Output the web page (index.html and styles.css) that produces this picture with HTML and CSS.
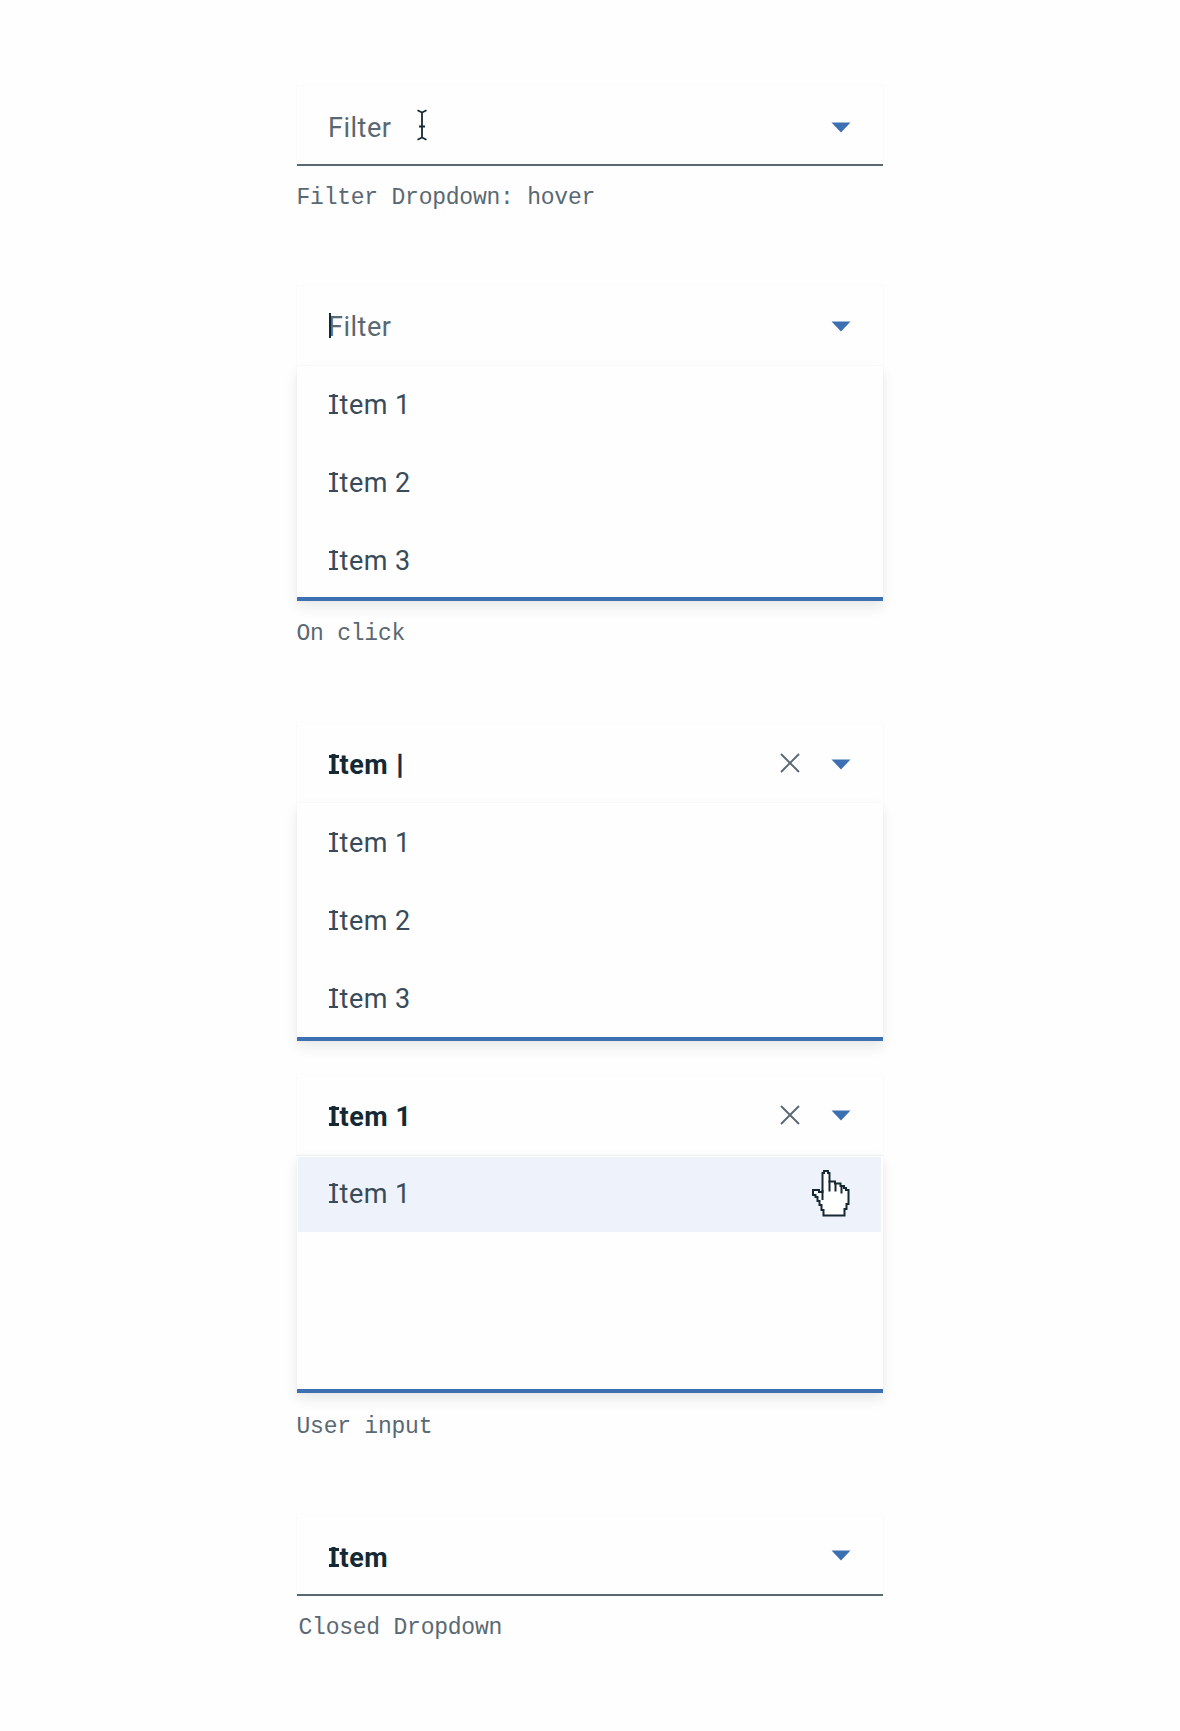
FILE: index.html
```html
<!DOCTYPE html>
<html lang="en">
<head>
<meta charset="utf-8">
<title>Filter Dropdown</title>
<link rel="stylesheet" href="styles.css">
</head>
<body>
<svg width="0" height="0" class="defs" aria-hidden="true">
  <symbol id="arrow" viewBox="0 0 20 11"><path d="M.5.5h19L10 10.5z" fill="#3d70b2"/></symbol>
  <symbol id="clear" viewBox="0 0 20 20"><path d="M1 1l18 18M19 1L1 19" fill="none" stroke="#5a6872" stroke-width="1.9"/></symbol>
</svg>
<main class="states">
  <section class="state state-hover">
    <div class="field closed">
      <span class="label placeholder">Filter</span>
      <svg class="ibeam" viewBox="0 0 10 32"><path d="M.5 1.2L5 3.500 9.500 1.200M5 3.500v25M.5 30.800L5 28.500l4.500 2.300M2 17.500h6" fill="none" stroke="#152935" stroke-width="1.8"/></svg>
      <svg class="arrow"><use href="#arrow"/></svg>
    </div>
    <p class="caption">Filter Dropdown: hover</p>
  </section>

  <section class="state state-click">
    <div class="field">
      <span class="label placeholder">Filter<i class="caret"></i></span>
      <svg class="arrow"><use href="#arrow"/></svg>
    </div>
    <ul class="menu">
      <li class="item">Item 1</li>
      <li class="item">Item 2</li>
      <li class="item">Item 3</li>
    </ul>
    <p class="caption">On click</p>
  </section>

  <section class="state state-typing">
    <div class="field">
      <span class="label value">Item <span class="bar">|</span></span>
      <svg class="clear"><use href="#clear"/></svg>
      <svg class="arrow"><use href="#arrow"/></svg>
    </div>
    <ul class="menu">
      <li class="item">Item 1</li>
      <li class="item">Item 2</li>
      <li class="item">Item 3</li>
    </ul>
  </section>

  <section class="state state-match">
    <div class="field">
      <span class="label value">Item 1</span>
      <svg class="clear"><use href="#clear"/></svg>
      <svg class="arrow"><use href="#arrow"/></svg>
    </div>
    <ul class="menu">
      <li class="item active">Item 1
        <svg class="hand" viewBox="0 0 38 47"><path d="M12 1h4v2h1.500v8.500H23v2h5.500V16H32v2h2v2h2.500v14h-2v5h-2v6.500h-21V40H9.500v-5h-2v-4h-2v-4h-2v-2H1v-5h6v2h3.500V3H12z" fill="#fff" stroke="#152935" stroke-width="2"/><path d="M10.500 20v10M17.500 11v10.500M23.500 13v8.500M29.500 16v7.500" fill="none" stroke="#152935" stroke-width="2"/></svg>
      </li>
    </ul>
    <p class="caption">User input</p>
  </section>

  <section class="state state-closed">
    <div class="field closed">
      <span class="label value">Item</span>
      <svg class="arrow"><use href="#arrow"/></svg>
    </div>
    <p class="caption">Closed Dropdown</p>
  </section>
</main>
</body>
</html>
```
FILE: styles.css
```css
* { box-sizing: border-box; }
body {
  margin: 0;
  background: #fefefe;
  font-family: Roboto, "Liberation Sans", sans-serif;
  font-size: 27px;
  color: #394b59;
}
.defs { position: absolute; }
.states {
  width: 586px;
  margin: 0 0 0 296.5px;
  padding-top: 86px;
}
.state { display: flex; flex-direction: column; }
.state-hover { height: 200px; }
.state-click { height: 437px; }
.state-typing { height: 352px; }
.state-match { height: 440px; }

.field {
  display: flex;
  align-items: flex-start;
  height: 80px;
  padding: 0 31.5px 0 32px;
  box-shadow: 0 0 0 1px #fafbfb;
}
.closed { border-bottom: 2px solid #5a6872; }
.label { line-height: 78px; position: relative; white-space: pre; }
.placeholder { color: #5a6872; letter-spacing: .5px; left: -.5px; }
.value { font-weight: 700; color: #152935; }
.arrow { width: 20px; height: 11px; margin: 36px 0 0 auto; }
.clear { width: 20px; height: 20px; margin: 30px 0 0 auto; }
.clear + .arrow { margin-left: 31px; }
.ibeam { width: 10px; height: 32px; margin: 23px 0 0 25.5px; }
.caret {
  position: absolute;
  left: .5px;
  top: 26px;
  width: 2px;
  height: 25px;
  background: #152935;
}
.bar { margin-left: 1px; -webkit-text-stroke: .6px currentColor; }

/* Slab serifs for the capital I that opens each item */
.value, .item {
  letter-spacing: .5px;
  background-repeat: no-repeat;
  background-image: linear-gradient(currentColor, currentColor), linear-gradient(currentColor, currentColor);
}
.value { background-size: 10px 3px; background-position: 0 29px, 0 45px; }
.value::first-letter, .item::first-letter { margin-left: 1px; letter-spacing: 2.2px; }

.menu {
  list-style: none;
  margin: 0;
  padding: 0;
  border-bottom: 4px solid #3d70b2;
  box-shadow: 0 6px 12px rgba(0, 0, 0, .09), 0 0 0 1px #fafbfb;
  background-color: #fefefe;
}
.item {
  position: relative;
  height: 78px;
  line-height: 78px;
  padding-left: 32.5px;
  background-size: 9px 2px;
  background-position: 32.5px 29px, 32.5px 46px;
}
.caption {
  margin: 0;
  font: 23px/30px "Liberation Mono", monospace;
  letter-spacing: -.23px;
  color: #5a6872;
}

.state-hover .label { top: 2.5px; }
.state-hover .caption { margin-top: 17px; }
.state-click .label { top: 2px; }
.state-click .caret { top: 25px; }
.state-click .arrow { margin-top: 35px; }
.state-click .menu { height: 235px; }
.state-click .caption { margin-top: 18px; }
.state-typing .label { top: 3px; }
.state-typing .menu { height: 238px; }
.state-typing .item { top: 1px; }
.state-typing .arrow { margin-top: 36px; }
.state-match .label { top: 3px; }
.state-match .arrow { margin-top: 35px; }
.state-match .clear { margin-top: 30px; }
.state-match .menu { height: 238px; border-top: 1px solid #eef0f3; }
.state-match .caption { margin-top: 19px; }
.active {
  height: 75px;
  margin: 1px 2px 0 1px;
  padding-left: 31.5px;
  line-height: 74px;
  background-color: #eef2fb;
  background-position: 31.5px 27px, 31.5px 44px;
}
.hand { position: absolute; left: 514px; top: 12.500px; width: 38px; height: 47px; }
.state-closed .field { height: 81px; }
.state-closed .arrow { margin-top: 35px; }
.state-closed .label { top: 4px; }
.state-closed .caption { margin: 17px 0 0 2px; }
```
